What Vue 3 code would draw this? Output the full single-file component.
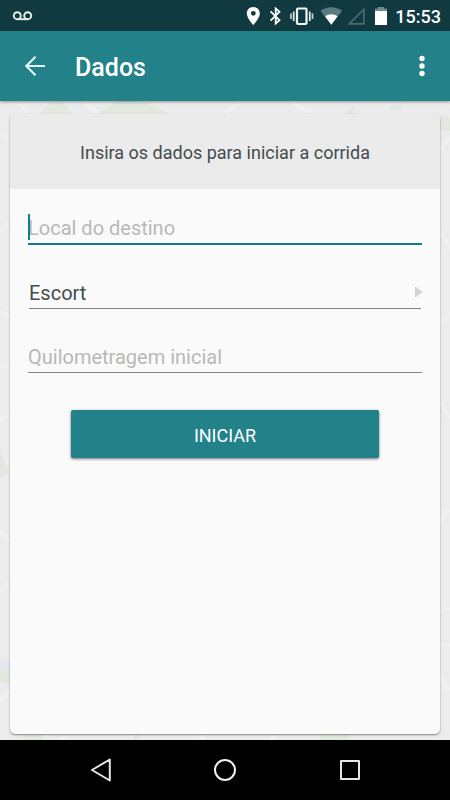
<script setup>
import { ref } from 'vue'

const destination = ref('')
const vehicle = ref('Escort')
const mileage = ref('')
</script>

<template>
  <div class="screen">
    <header class="status-bar">
      <svg width="22" height="22" viewBox="0 0 22 22" aria-hidden="true">
        <g fill="none" stroke="#e8f0e8" stroke-width="1.900">
          <circle cx="5.300" cy="10.700" r="3.500" />
          <circle cx="15.700" cy="10.700" r="3.500" />
          <path d="M5.300 14.200H15.700" />
        </g>
      </svg>
      <div class="status-right">
        <svg width="22" height="22" viewBox="0 0 22 22" aria-hidden="true">
          <path fill="#fff" fill-rule="evenodd" d="M10.300 2C6.600 2 3.800 4.800 3.800 8.400C3.800 13 10.300 20 10.300 20S16.800 13 16.800 8.400C16.800 4.800 14 2 10.300 2ZM10.300 5.900A2.400 2.400 0 1 1 10.300 10.700A2.400 2.400 0 0 1 10.300 5.900Z" />
        </svg>
        <svg width="20" height="22" viewBox="0 0 20 22" aria-hidden="true">
          <path fill="none" stroke="#fff" stroke-width="1.800" d="M5.500 6.300L14.500 15.200L10.700 18.500V3.500L14.500 6.800L5.500 15.700" />
        </svg>
        <svg width="33" height="22" viewBox="0 0 33 22" aria-hidden="true">
          <rect x="12" y="3.500" width="9.500" height="15.500" rx="1" fill="none" stroke="#f4f7f7" stroke-width="2.200" />
          <path fill="none" stroke="#e4eaea" stroke-width="1.700" d="M8.700 6.500V16M24.800 6.500V16" />
          <path fill="none" stroke="#c3d0d0" stroke-width="1.700" d="M6 8.500V14M27.500 8.500V14" />
        </svg>
        <svg width="27" height="22" viewBox="0 0 27 22" aria-hidden="true">
          <path fill="#5b7a7e" d="M2.500 5.900C8.500 .9 18 .9 24 5.900L13.300 19.800Z" />
          <path fill="#fff" d="M7 11.300C10.800 8.500 15.800 8.500 19.600 11.300L13.300 19.800Z" />
        </svg>
        <svg width="25" height="22" viewBox="0 0 25 22" aria-hidden="true">
          <path fill="none" stroke="#4b6b6f" stroke-width="1.600" d="M4.300 18.900L18.900 4.200V18.900Z" />
        </svg>
        <svg width="25" height="22" viewBox="0 0 25 22" aria-hidden="true">
          <path fill="#6f8a8d" d="M5 6V3.500H8V2H14V3.500H17V6Z" />
          <rect x="5" y="6" width="12" height="14" fill="#fff" />
        </svg>
        <time>15:53</time>
      </div>
    </header>

    <div class="app-bar">
      <button class="icon-button" type="button" aria-label="Voltar">
        <svg width="22" height="22" viewBox="0 0 22 22" aria-hidden="true">
          <path fill="none" stroke="#e6f5f6" stroke-width="2.200" d="M21 11H2.500M11.500 1.700L2.300 11L11.500 20.300" />
        </svg>
      </button>
      <h1>Dados</h1>
      <button class="icon-button" type="button" aria-label="Mais opções">
        <svg width="6" height="22" viewBox="0 0 6 22" fill="#fff" aria-hidden="true">
          <circle cx="3" cy="3.500" r="2.700" />
          <circle cx="3" cy="11" r="2.700" />
          <circle cx="3" cy="18.500" r="2.700" />
        </svg>
      </button>
    </div>

    <main>
      <svg class="map" viewBox="0 0 450 639" preserveAspectRatio="none" aria-hidden="true">
        <path fill="#e1e9de" d="M40 13L52 0H62L72 13ZM98 13L116 0H142L170 13ZM344 13L354 4V13ZM438 14H446L450 18V30H438ZM0 568L12 573V584L0 580ZM23 633H43V639H23ZM134 633H140V639H134ZM320 633H350L348 639H320ZM0 348L9 370V373L0 377Z" />
        <path fill="#e2e9ee" d="M0 557L12 560V574L0 569ZM390 5L402 2V8L390 11Z" />
        <path fill="none" stroke="#f1f1f1" stroke-width="4" d="M18 0L28 13M84 0L98 13M225 13L240 0M290 0L310 13M0 32L10 40M0 130L10 122M0 210L10 216M0 266H10M0 320L10 312M0 430L10 440M0 490L10 482M0 600L10 590M440 50L450 36M440 130L450 148M440 222L450 212M440 300L450 318M440 420L450 408M440 511L450 508M440 544H450M440 575L450 590M60 639L72 630M200 639L210 630M270 639L280 630" />
      </svg>
      <form class="card" @submit.prevent>
        <p class="card-heading">Insira os dados para iniciar a corrida</p>
        <div class="card-body">
          <div class="field focused">
            <input v-model="destination" type="text" aria-label="Local do destino" placeholder="Local do destino" />
            <span class="caret"></span>
          </div>
          <div class="field vehicle">
            <select v-model="vehicle" aria-label="Veículo">
              <option>Escort</option>
            </select>
            <svg width="8" height="12" viewBox="0 0 8 12" aria-hidden="true">
              <path fill="#d3d3d3" d="M0 .5L8 6L0 11.500Z" />
            </svg>
          </div>
          <div class="field">
            <input v-model="mileage" type="text" inputmode="numeric" aria-label="Quilometragem inicial" placeholder="Quilometragem inicial" />
          </div>
          <button class="submit" type="submit">INICIAR</button>
        </div>
      </form>
    </main>

    <nav class="nav-bar">
      <button type="button" aria-label="Voltar">
        <svg width="24" height="24" viewBox="0 0 24 24" aria-hidden="true">
          <path fill="none" stroke="#e6e6e6" stroke-width="2" stroke-linejoin="round" d="M20.800 1.500V22.500L3 12Z" />
        </svg>
      </button>
      <button type="button" aria-label="Início">
        <svg width="24" height="24" viewBox="0 0 24 24" aria-hidden="true">
          <circle cx="12" cy="12" r="10" fill="none" stroke="#f0f0f0" stroke-width="2" />
        </svg>
      </button>
      <button type="button" aria-label="Aplicativos recentes">
        <svg width="24" height="24" viewBox="0 0 24 24" aria-hidden="true">
          <rect x="3" y="3" width="18" height="18" fill="none" stroke="#e6e6e6" stroke-width="2" stroke-linejoin="round" />
        </svg>
      </button>
    </nav>
  </div>
</template>

<style>
body {
  margin: 0;
}
</style>

<style scoped>
.screen {
  display: flex;
  flex-direction: column;
  min-height: 100vh;
  background: #ececec;
  color: #434d4d;
  font-family: Roboto, "Liberation Sans", sans-serif;
}

svg {
  display: block;
  flex: none;
}

button {
  border: 0;
  padding: 0;
  background: none;
  font-family: inherit;
  cursor: pointer;
}

.status-bar {
  display: flex;
  align-items: center;
  justify-content: space-between;
  height: 31px;
  padding: 0 9px 0 12px;
  background: #113a40;
}

.status-right {
  display: flex;
  align-items: center;
}

.status-right time {
  padding-top: 2px;
  color: #fff;
  font-size: 18px;
  font-weight: 500;
  line-height: 24px;
}

.app-bar {
  position: relative;
  z-index: 1;
  display: flex;
  align-items: center;
  height: 70px;
  padding: 0 11px;
  background: #23818a;
  box-shadow: 0 1px 3px rgba(0, 0, 0, 0.4);
}

.icon-button {
  display: flex;
  align-items: center;
  justify-content: center;
  width: 48px;
  height: 48px;
  margin-right: 16px;
}

.icon-button:last-child {
  width: 34px;
  margin-right: 0;
}

h1 {
  flex: 1;
  margin: 0;
  padding-top: 4px;
  color: #fff;
  font-size: 25px;
  font-weight: 500;
  line-height: 32px;
}

main {
  position: relative;
  display: flex;
  flex: 1;
  padding: 13px 10px 6px;
}

.map {
  position: absolute;
  inset: 0;
  width: 100%;
  height: 100%;
}

.card {
  position: relative;
  flex: 1;
  overflow: hidden;
  border-radius: 5px;
  background: #fafafa;
  box-shadow: 0 1px 2px rgba(0, 0, 0, 0.45);
}

.card-heading {
  margin: 0;
  padding: 27px 16px 24px;
  background: #ebebeb;
  font-size: 18px;
  line-height: 24px;
  text-align: center;
}

.card-body {
  display: flex;
  flex-direction: column;
  gap: 28px;
  padding: 20px 18px;
}

.field {
  position: relative;
  display: flex;
  align-items: center;
  box-sizing: border-box;
  height: 36px;
  border-bottom: 1px solid #858585;
}

.field.focused {
  border-bottom: 2px solid #0d8088;
}

.field.vehicle {
  margin: 0 1px;
}

.field input,
.field select {
  flex: 1;
  min-width: 0;
  height: 32px;
  margin: 0;
  border: 0;
  padding: 4px 0 0;
  outline: 0;
  appearance: none;
  background: transparent;
  color: inherit;
  font-family: inherit;
  font-size: 20px;
  line-height: 28px;
}

.field input::placeholder {
  color: #b8b8b8;
  opacity: 1;
}

.field.vehicle svg {
  position: absolute;
  right: -2px;
  top: 13px;
  pointer-events: none;
}

.caret {
  position: absolute;
  left: 0;
  top: 5px;
  width: 2px;
  height: 26px;
  background: #0d8088;
}

.submit {
  align-self: center;
  width: 78%;
  height: 48px;
  margin-top: 9px;
  padding-top: 4px;
  border-radius: 2px;
  background: #23818a;
  box-shadow: 0 1px 3px rgba(0, 0, 0, 0.55);
  color: #fff;
  font-size: 18px;
  line-height: 24px;
}

.nav-bar {
  display: flex;
  justify-content: center;
  gap: 12px;
  height: 60px;
  background: #000;
}

.nav-bar button {
  display: flex;
  align-items: center;
  justify-content: center;
  width: 25%;
}
</style>
